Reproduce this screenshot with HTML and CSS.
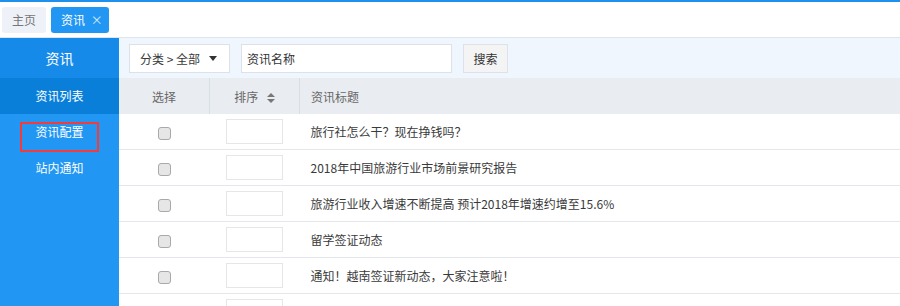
FILE: index.html
```html
<!DOCTYPE html>
<html lang="zh-CN">
<head>
    <meta charset="UTF-8">
    <title>资讯列表</title>
    <link rel="stylesheet" href="styles.css">
</head>
<body>
    <div class="topline"></div>
    <div class="tabs">
        <div class="tab">主页</div>
        <div class="tab active">资讯 <span class="close">×</span></div>
    </div>

    <div class="layout">
        <div class="sidebar">
            <div class="side-title">资讯</div>
            <div class="side-item current">资讯列表</div>
            <div class="side-item marked">资讯配置</div>
            <div class="side-item">站内通知</div>
        </div>

        <div class="main">
            <div class="filter">
                <div class="select">分类 &gt; 全部 <span class="caret"></span></div>
                <input class="search-input" type="text" placeholder="资讯名称">
                <button class="search-btn">搜索</button>
            </div>

            <table class="list">
                <thead>
                    <tr>
                        <th class="col-check">选择</th>
                        <th class="col-sort">排序 <span class="sort-icon"><i class="up"></i><i class="down"></i></span></th>
                        <th class="col-title">资讯标题</th>
                    </tr>
                </thead>
                <tbody>
                    <tr>
                        <td class="col-check"><span class="box"></span></td>
                        <td class="col-sort"><span class="num"></span></td>
                        <td class="col-title">旅行社怎么干？现在挣钱吗？</td>
                    </tr>
                    <tr>
                        <td class="col-check"><span class="box"></span></td>
                        <td class="col-sort"><span class="num"></span></td>
                        <td class="col-title">2018年中国旅游行业市场前景研究报告</td>
                    </tr>
                    <tr>
                        <td class="col-check"><span class="box"></span></td>
                        <td class="col-sort"><span class="num"></span></td>
                        <td class="col-title">旅游行业收入增速不断提高 预计2018年增速约增至15.6%</td>
                    </tr>
                    <tr>
                        <td class="col-check"><span class="box"></span></td>
                        <td class="col-sort"><span class="num"></span></td>
                        <td class="col-title">留学签证动态</td>
                    </tr>
                    <tr>
                        <td class="col-check"><span class="box"></span></td>
                        <td class="col-sort"><span class="num"></span></td>
                        <td class="col-title">通知！越南签证新动态，大家注意啦！</td>
                    </tr>
                    <tr>
                        <td class="col-check"><span class="box"></span></td>
                        <td class="col-sort"><span class="num"></span></td>
                        <td class="col-title"></td>
                    </tr>
                </tbody>
            </table>
        </div>
    </div>
</body>
</html>
```

FILE: styles.css
```css
body {
    margin: 0;
    font-family: "Noto Sans CJK SC", "Noto Sans", sans-serif;
    font-size: 12px;
    color: #3a3a3a;
    background: #fff;
    overflow: hidden;
}

.topline {
    height: 2px;
    background: #1e90ee;
}

.tabs {
    display: flex;
    align-items: center;
    gap: 5px;
    height: 35px;
    padding: 0 2px;
    border-bottom: 1px solid #dfe5ec;
}

.tab {
    height: 26px;
    line-height: 26px;
    padding: 0 10px;
    border-radius: 3px;
    background: #eef1f8;
    color: #777;
}

.tab.active {
    background: #2196f3;
    color: #fff;
    padding-right: 6px;
}

.tab .close {
    margin-left: 3px;
    color: #d8ebfc;
}

.layout {
    display: flex;
    height: 268px;
    overflow: hidden;
}

.sidebar {
    width: 119px;
    flex-shrink: 0;
    background: #2196f3;
    color: #fff;
    text-align: center;
}

.side-title {
    height: 40px;
    line-height: 40px;
    background: #168ae8;
    font-size: 14px;
}

.side-item {
    position: relative;
    height: 36px;
    line-height: 36px;
}

.side-item.current {
    background: #0a7fd9;
}

.side-item.marked::after {
    content: "";
    position: absolute;
    left: 20px;
    top: 8px;
    width: 75px;
    height: 26px;
    border: 2px solid #f43b3b;
}

.main {
    flex: 1;
    min-width: 0;
}

.filter {
    display: flex;
    align-items: center;
    gap: 11px;
    height: 40px;
    padding: 0 10px;
    background: #eff6fe;
}

.select {
    display: flex;
    align-items: center;
    box-sizing: border-box;
    width: 101px;
    height: 29px;
    padding: 0 10px;
    background: #fff;
    border: 1px solid #dde2e8;
    white-space: nowrap;
}

.caret {
    margin-left: 9px;
    border-left: 4px solid transparent;
    border-right: 4px solid transparent;
    border-top: 5px solid #333;
}

.search-input {
    box-sizing: border-box;
    width: 211px;
    height: 29px;
    padding: 0 5px;
    border: 1px solid #dde2e8;
    font-family: inherit;
    font-size: 12px;
}

.search-input::placeholder {
    color: #333;
}

.search-btn {
    box-sizing: border-box;
    width: 45px;
    height: 29px;
    padding: 0;
    background: #f4f4f4;
    border: 1px solid #dde2e8;
    font-family: inherit;
    font-size: 12px;
    color: #333;
}

.list {
    width: 100%;
    border-collapse: collapse;
}

.list th {
    height: 36px;
    padding: 0;
    background: #e9ecf1;
    color: #666;
    font-weight: normal;
    border-left: 1px solid #d9dee5;
}

.list th:first-child {
    border-left: none;
}

.list td {
    height: 35px;
    padding: 0;
    border-bottom: 1px solid #e3e7ec;
}

.col-check {
    width: 90px;
    text-align: center;
}

.col-sort {
    width: 89px;
    text-align: center;
}

.list .col-title {
    text-align: left;
    padding-left: 11px;
}

.sort-icon {
    display: inline-flex;
    flex-direction: column;
    gap: 2px;
    margin-left: 6px;
    vertical-align: middle;
}

.sort-icon i {
    border-left: 4px solid transparent;
    border-right: 4px solid transparent;
}

.sort-icon .up {
    border-bottom: 4px solid #777;
}

.sort-icon .down {
    border-top: 4px solid #777;
}

.box {
    display: inline-block;
    box-sizing: border-box;
    width: 13px;
    height: 13px;
    border: 1px solid #a9a9a9;
    border-radius: 3px;
    background: #e6e6e6;
    vertical-align: middle;
}

.num {
    display: inline-block;
    box-sizing: border-box;
    width: 57px;
    height: 25px;
    border: 1px solid #e6e6e6;
    vertical-align: middle;
}
```
